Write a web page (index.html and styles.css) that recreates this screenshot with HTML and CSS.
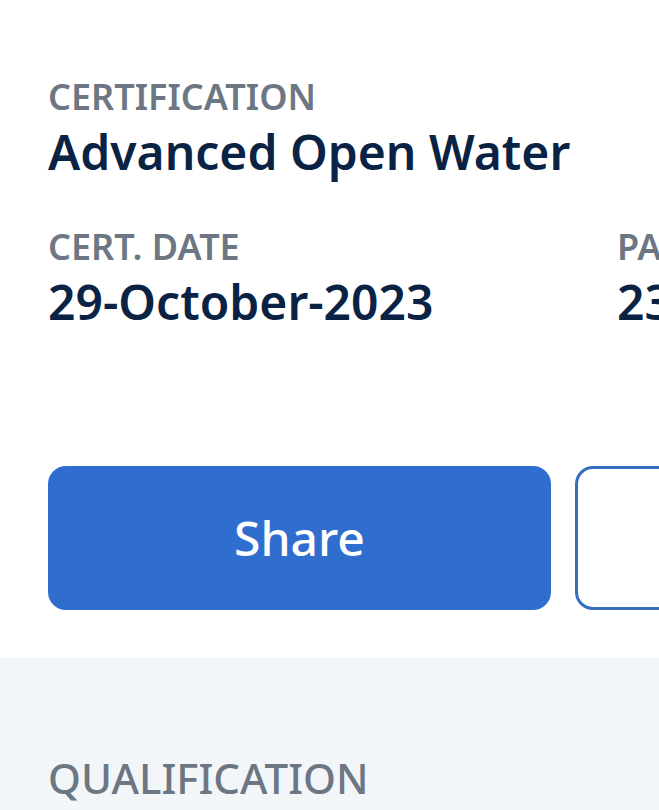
FILE: index.html
```html
<!DOCTYPE html>
<html lang="en">
<head>
<meta charset="utf-8">
<meta name="viewport" content="width=device-width, initial-scale=1">
<title>Certification</title>
<link rel="stylesheet" href="styles.css">
</head>
<body>
<main class="page">
  <section class="card">
    <dl class="details">
      <div class="field field-wide">
        <dt class="label">CERTIFICATION</dt>
        <dd class="value">Advanced Open Water</dd>
      </div>
      <div class="field">
        <dt class="label">CERT. DATE</dt>
        <dd class="value">29-October-2023</dd>
      </div>
      <div class="field">
        <dt class="label">PA</dt>
        <dd class="value">23</dd>
      </div>
    </dl>
    <div class="actions">
      <button class="button button-primary" type="button">Share</button>
      <button class="button button-outline" type="button"></button>
    </div>
  </section>
  <section class="qualification">
    <h2 class="heading">QUALIFICATION</h2>
  </section>
</main>
</body>
</html>
```
FILE: styles.css
```css
* {
  box-sizing: border-box;
}

body {
  margin: 0;
  background: #f2f6f9;
  font-family: "Noto Sans", sans-serif;
  overflow: hidden;
}

.page {
  min-height: 100vh;
  overflow: hidden;
}

.card {
  padding: 72px 0 48px 48px;
  background: #fff;
}

.details {
  display: grid;
  grid-template-columns: 529px 1fr;
  gap: 40px;
  margin: 0 0 134px;
}

.field-wide {
  grid-column: 1 / -1;
}

.label {
  color: #6c7783;
  font-size: 36px;
  font-weight: 600;
  line-height: 50px;
}

.value {
  margin: 0;
  color: #0a2344;
  font-size: 48px;
  font-weight: 600;
  line-height: 60px;
}

.actions {
  display: grid;
  grid-template-columns: 503px 503px;
  gap: 24px;
}

.button {
  height: 144px;
  border: 3px solid #2f6ecf;
  border-radius: 18px;
  font: 500 48px/66px "Noto Sans", sans-serif;
}

.button-primary {
  background: #2f6ecf;
  color: #fff;
}

.button-outline {
  border-color: #376fbf;
  background: #fff;
  color: #2f6ecf;
}

.qualification {
  padding: 90px 48px 0;
}

.heading {
  margin: 0;
  color: #6c7783;
  font-size: 42px;
  font-weight: 500;
  line-height: 60px;
}
```
